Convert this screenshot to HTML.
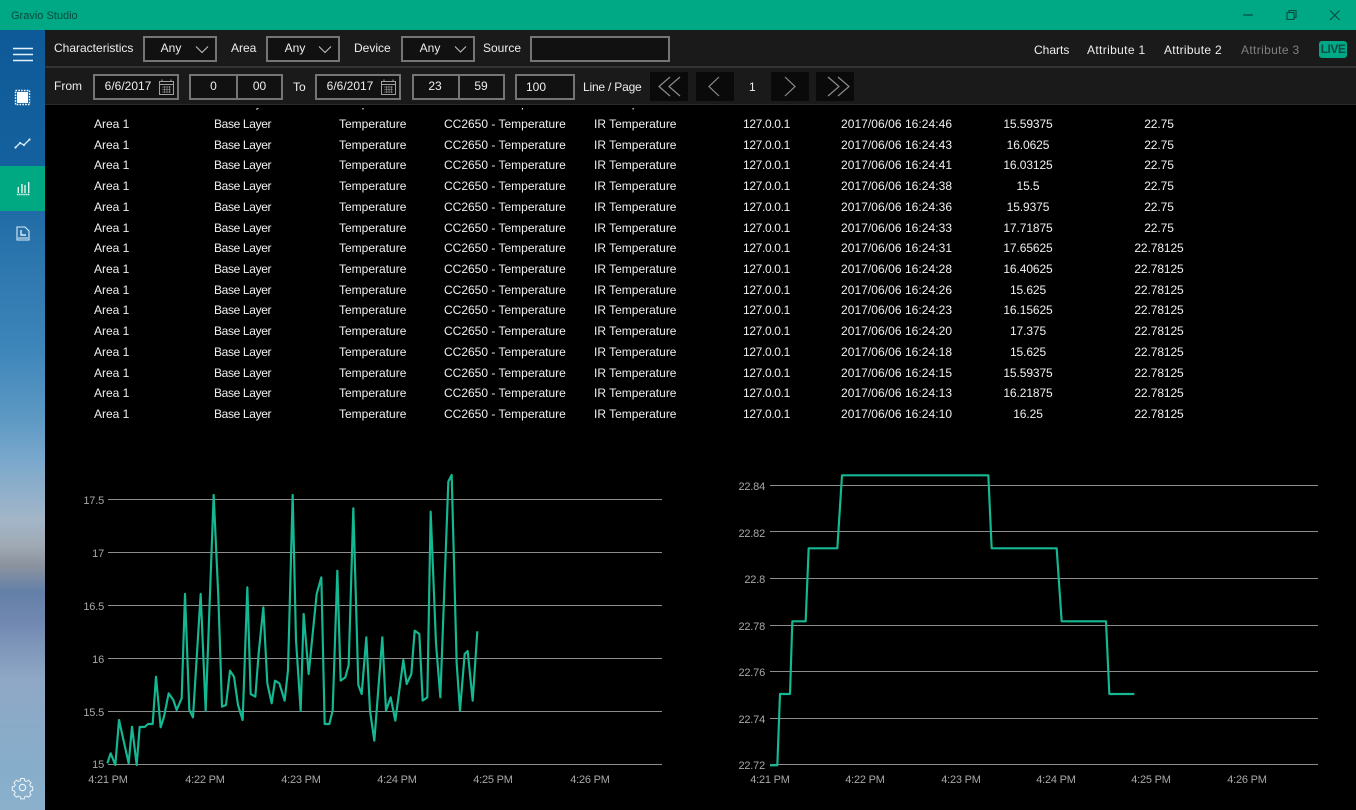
<!DOCTYPE html>
<html><head><meta charset="utf-8"><title>Gravio Studio</title>
<style>
html,body{margin:0;padding:0;width:1356px;height:810px;overflow:hidden;background:#000;font-family:"Liberation Sans",sans-serif;color:#eee}
.abs,.t,.b{position:absolute}
#title{left:0;top:0;width:1356px;height:30px;background:#00a985;z-index:5}
#title span{position:absolute;left:11px;top:9px;font-size:11px;line-height:14px;color:#084a40}
#side{left:0;top:30px;width:45px;height:780px;z-index:4;background:linear-gradient(180deg,#0e5a98 0,#14619e 135px,#2a74ad 220px,#3d86ba 320px,#5e99c4 390px,#7aa8cc 430px,#a3b6c8 490px,#a0aab5 515px,#8c939f 535px,#6480a8 562px,#7088b0 590px,#8fa8c5 650px,#86aecb 740px,#8ab0cc 780px)}
#sel{left:0;top:166px;width:45px;height:45px;background:#00a982;z-index:5}
#tb{left:45px;top:30px;width:1311px;height:75px;background:#1a1a1a;z-index:3;border-bottom:1px solid #2c2c2c;box-sizing:border-box}
#cover{left:45px;top:105px;width:1311px;height:3px;background:#000;z-index:2}
#sep{left:45px;top:66px;width:1311px;height:2px;background:#333;z-index:4}
.t{font-size:12px;line-height:16px;color:#eee;z-index:6;white-space:nowrap}
.b{border:2px solid #757575;background:#111;box-sizing:border-box;z-index:5;font-size:12px;color:#eee;line-height:21px}
.c{position:absolute;text-align:center}
.pg{position:absolute;top:72px;height:29px;width:38px;background:#0a0a0a;z-index:5}
#live{left:1319px;top:41px;width:28px;height:17px;background:#00a985;border-radius:3px;z-index:6;color:#0b4c44;font-size:12px;font-weight:bold;line-height:17px;text-align:center;letter-spacing:-.5px}
.r{position:absolute;left:0;width:1356px;height:20px;font-size:12px;line-height:20px;color:#f0f0f0;white-space:nowrap}
.r i{font-style:normal;position:absolute;top:0}
.r i:nth-child(1){left:94px}.r i:nth-child(2){left:214px;letter-spacing:-.35px}.r i:nth-child(3){left:339px}.r i:nth-child(4){left:444px}.r i:nth-child(5){left:594px}.r i:nth-child(6){left:743px;letter-spacing:-.35px}.r i:nth-child(7){left:841px;letter-spacing:.05px}
.r i:nth-child(8){left:978px;width:100px;text-align:center;letter-spacing:-.1px}.r i:nth-child(9){left:1109px;width:100px;text-align:center;letter-spacing:-.1px}
svg{position:absolute;left:0;top:0;overflow:visible}
#icons{z-index:7}
#charts text{font-family:"Liberation Sans",sans-serif;font-size:11px;fill:#a8a8a8;letter-spacing:-.2px}
</style></head><body>
<div class="abs" id="title"><span>Gravio Studio</span></div>
<div class="abs" id="side"></div>
<div class="abs" id="sel"></div>
<div class="abs" id="tb"></div>
<div class="abs" id="cover"></div>
<div class="abs" id="sep"></div>

<div class="t" style="left:54px;top:40px">Characteristics</div>
<div class="b" style="left:143px;top:36px;width:74px;height:26px"><span class="c" style="left:8px;width:36px">Any</span></div>
<div class="t" style="left:231px;top:40px">Area</div>
<div class="b" style="left:266px;top:36px;width:74px;height:26px"><span class="c" style="left:9px;width:36px">Any</span></div>
<div class="t" style="left:354px;top:40px">Device</div>
<div class="b" style="left:401px;top:36px;width:74px;height:26px"><span class="c" style="left:9px;width:36px">Any</span></div>
<div class="t" style="left:483px;top:40px">Source</div>
<div class="b" style="left:530px;top:36px;width:140px;height:26px"></div>

<div class="t" style="left:1034px;top:42px">Charts</div>
<div class="t" style="left:1087px;top:42px;letter-spacing:.35px">Attribute 1</div>
<div class="t" style="left:1164px;top:42px;letter-spacing:.3px">Attribute 2</div>
<div class="t" style="left:1241px;top:42px;color:#808080;letter-spacing:.35px">Attribute 3</div>
<div class="abs" id="live">LIVE</div>

<div class="t" style="left:54px;top:78px">From</div>
<div class="b" style="left:93px;top:74px;width:86px;height:26px;line-height:20px"><span class="c" style="left:5px;width:56px">6/6/2017</span></div>
<div class="b" style="left:189px;top:74px;width:94px;height:26px"><span class="c" style="left:0;width:45px">0</span><span class="c" style="left:45px;width:45px;border-left:2px solid #757575;box-sizing:border-box;height:22px">00</span></div>
<div class="t" style="left:293px;top:79px">To</div>
<div class="b" style="left:315px;top:74px;width:86px;height:26px;line-height:20px"><span class="c" style="left:5px;width:56px">6/6/2017</span></div>
<div class="b" style="left:412px;top:74px;width:93px;height:26px"><span class="c" style="left:-1px;width:44px">23</span><span class="c" style="left:44px;width:44px;border-left:2px solid #757575;box-sizing:border-box;height:22px">59</span></div>
<div class="b" style="left:515px;top:74px;width:60px;height:26px;line-height:23px"><span class="c" style="left:-1px;width:40px">100</span></div>
<div class="t" style="left:583px;top:79px;letter-spacing:-.2px">Line / Page</div>
<div class="pg" style="left:650px"></div><div class="pg" style="left:696px"></div>
<div class="t" style="left:749px;top:79px">1</div>
<div class="pg" style="left:771px"></div><div class="pg" style="left:816px"></div>

<svg id="icons" class="abs" width="1356" height="810" style="z-index:7" fill="none">
<!-- window controls -->
<path d="M1243 15h10" stroke="#084a40" stroke-width="1.2"/>
<path d="M1287 12.500h7v7h-7zM1289 12.500v-2h7v7h-2" stroke="#084a40" stroke-width="1.1"/>
<path d="M1330 10.500l9.500 9.500M1339.500 10.500l-9.500 9.500" stroke="#084a40" stroke-width="1.1"/>
<!-- hamburger -->
<path d="M13 48.500h20M13 54.500h20M13 60.500h20" stroke="#e6f2fa" stroke-width="1.6"/>
<!-- chip -->
<rect x="17" y="92" width="11" height="11" fill="#fff"/>
<rect x="15.500" y="90.500" width="14" height="14" stroke="#fff" stroke-width="1.400" stroke-dasharray="1.600 1.200"/>
<!-- trend -->
<path d="M15 148l5-5 4 2 6-6" stroke="#dcebf5" stroke-width="1.300"/>
<circle cx="15.500" cy="147.500" r="1.100" fill="#dcebf5"/><circle cx="20" cy="143" r="1.100" fill="#dcebf5"/><circle cx="24" cy="145" r="1.100" fill="#dcebf5"/><circle cx="29.500" cy="139.500" r="1.100" fill="#dcebf5"/>
<!-- bars -->
<path d="M18.300 193v-6M22 193v-9M25 193v-8M28.700 193v-11" stroke="#e4f5f0" stroke-width="1.400"/>
<path d="M17 194.500h13" stroke="#e4f5f0" stroke-width="1.400" stroke-dasharray="1.500 .6"/>
<!-- report -->
<path d="M17 227h8l4 4v9H17z" stroke="#dcebf5" stroke-width="1.100"/>
<path d="M21 230v5h5" stroke="#dcebf5" stroke-width="1.400"/>
<path d="M18 238h10" stroke="#dcebf5" stroke-width="1.100"/>
<!-- gear -->
<g transform="translate(0 .5)">
<circle cx="22.500" cy="787" r="3.200" stroke="#eef5fa" stroke-width="1.100"/>
<path d="M20.700 778h3.600l.5 2.200 1.700.7 2-1.200 2.500 2.500-1.200 2 .7 1.700 2.200.5v3.600l-2.200.5-.7 1.700 1.200 2-2.500 2.500-2-1.200-1.700.7-.5 2.200h-3.600l-.5-2.200-1.700-.7-2 1.200-2.500-2.500 1.200-2-.7-1.700-2.200-.5v-3.600l2.200-.5.7-1.700-1.200-2 2.500-2.500 2 1.200 1.700-.7z" stroke="#eef5fa" stroke-width="1"/>
</g>
<!-- chevrons dropdown -->
<path d="M196 46.500l6 6 6-6M319 46.500l6 6 6-6M455 46.500l5.500 5.500 5.500-5.500" stroke="#c4c4c4" stroke-width="1"/>
<!-- calendars -->
<g stroke="#a0a0a0" stroke-width="1">
<path d="M159.500 81.500h14v13h-14zM159.500 84.500h14M162 79.500v2M171 79.500v2"/>
<path d="M162 87h9M162 89.500h9M162 92h9M164.500 86v7M167 86v7M169.500 86v7" stroke-width=".6"/>
<path d="M381.500 81.500h14v13h-14zM381.500 84.500h14M384 79.500v2M393 79.500v2"/>
<path d="M384 87h9M384 89.500h9M384 92h9M386.500 86v7M389 86v7M391.500 86v7" stroke-width=".6"/>
</g>
<!-- paging -->
<g stroke="#8c8c8c" stroke-width="1.200">
<path d="M670 77l-11 9.500 11 9.500M680 77l-11 9.500 11 9.500"/>
<path d="M719 77l-10 9.500 10 9.500"/>
<path d="M785 77l10 9.500-10 9.500"/>
<path d="M828 77l11 9.500-11 9.500M838 77l11 9.500-11 9.500"/>
</g>
</svg>

<div id="rows">
<div class="r" style="top:93.300px"><i>Area 1</i><i>Base Layer</i><i>Temperature</i><i>CC2650 - Temperature</i><i>IR Temperature</i><i>127.0.0.1</i><i>2017/06/06 16:24:48</i><i>15.5</i><i>22.75</i></div>
<div class="r" style="top:114px"><i>Area 1</i><i>Base Layer</i><i>Temperature</i><i>CC2650 - Temperature</i><i>IR Temperature</i><i>127.0.0.1</i><i>2017/06/06 16:24:46</i><i>15.59375</i><i>22.75</i></div>
<div class="r" style="top:134.700px"><i>Area 1</i><i>Base Layer</i><i>Temperature</i><i>CC2650 - Temperature</i><i>IR Temperature</i><i>127.0.0.1</i><i>2017/06/06 16:24:43</i><i>16.0625</i><i>22.75</i></div>
<div class="r" style="top:155.400px"><i>Area 1</i><i>Base Layer</i><i>Temperature</i><i>CC2650 - Temperature</i><i>IR Temperature</i><i>127.0.0.1</i><i>2017/06/06 16:24:41</i><i>16.03125</i><i>22.75</i></div>
<div class="r" style="top:176.100px"><i>Area 1</i><i>Base Layer</i><i>Temperature</i><i>CC2650 - Temperature</i><i>IR Temperature</i><i>127.0.0.1</i><i>2017/06/06 16:24:38</i><i>15.5</i><i>22.75</i></div>
<div class="r" style="top:196.800px"><i>Area 1</i><i>Base Layer</i><i>Temperature</i><i>CC2650 - Temperature</i><i>IR Temperature</i><i>127.0.0.1</i><i>2017/06/06 16:24:36</i><i>15.9375</i><i>22.75</i></div>
<div class="r" style="top:217.500px"><i>Area 1</i><i>Base Layer</i><i>Temperature</i><i>CC2650 - Temperature</i><i>IR Temperature</i><i>127.0.0.1</i><i>2017/06/06 16:24:33</i><i>17.71875</i><i>22.75</i></div>
<div class="r" style="top:238.300px"><i>Area 1</i><i>Base Layer</i><i>Temperature</i><i>CC2650 - Temperature</i><i>IR Temperature</i><i>127.0.0.1</i><i>2017/06/06 16:24:31</i><i>17.65625</i><i>22.78125</i></div>
<div class="r" style="top:259px"><i>Area 1</i><i>Base Layer</i><i>Temperature</i><i>CC2650 - Temperature</i><i>IR Temperature</i><i>127.0.0.1</i><i>2017/06/06 16:24:28</i><i>16.40625</i><i>22.78125</i></div>
<div class="r" style="top:279.700px"><i>Area 1</i><i>Base Layer</i><i>Temperature</i><i>CC2650 - Temperature</i><i>IR Temperature</i><i>127.0.0.1</i><i>2017/06/06 16:24:26</i><i>15.625</i><i>22.78125</i></div>
<div class="r" style="top:300.400px"><i>Area 1</i><i>Base Layer</i><i>Temperature</i><i>CC2650 - Temperature</i><i>IR Temperature</i><i>127.0.0.1</i><i>2017/06/06 16:24:23</i><i>16.15625</i><i>22.78125</i></div>
<div class="r" style="top:321.100px"><i>Area 1</i><i>Base Layer</i><i>Temperature</i><i>CC2650 - Temperature</i><i>IR Temperature</i><i>127.0.0.1</i><i>2017/06/06 16:24:20</i><i>17.375</i><i>22.78125</i></div>
<div class="r" style="top:341.800px"><i>Area 1</i><i>Base Layer</i><i>Temperature</i><i>CC2650 - Temperature</i><i>IR Temperature</i><i>127.0.0.1</i><i>2017/06/06 16:24:18</i><i>15.625</i><i>22.78125</i></div>
<div class="r" style="top:362.500px"><i>Area 1</i><i>Base Layer</i><i>Temperature</i><i>CC2650 - Temperature</i><i>IR Temperature</i><i>127.0.0.1</i><i>2017/06/06 16:24:15</i><i>15.59375</i><i>22.78125</i></div>
<div class="r" style="top:383.200px"><i>Area 1</i><i>Base Layer</i><i>Temperature</i><i>CC2650 - Temperature</i><i>IR Temperature</i><i>127.0.0.1</i><i>2017/06/06 16:24:13</i><i>16.21875</i><i>22.78125</i></div>
<div class="r" style="top:404px"><i>Area 1</i><i>Base Layer</i><i>Temperature</i><i>CC2650 - Temperature</i><i>IR Temperature</i><i>127.0.0.1</i><i>2017/06/06 16:24:10</i><i>16.25</i><i>22.78125</i></div>
</div>

<svg id="charts" class="abs" width="1356" height="810" fill="none">
<g stroke="#8c8c8c" stroke-width="1">
<path d="M108 499.500H662M108 552.500H662M108 605.500H662M108 658.500H662M108 711.500H662M108 764.500H662"/>
<path d="M770 485.500H1318M770 531.500H1318M770 578.500H1318M770 625.500H1318M770 671.500H1318M770 718.500H1318M770 764.500H1318"/>
</g>
<g transform="translate(70 470) scale(.33333)">
<polyline stroke="#14b892" stroke-width="6.500" stroke-linejoin="round" points="112,880 122,850 136,885 147,750 176,880 186,770 200,885 209,771 224,771 234,762 248,762 258,620 272,772 282,740 296,670 310,690 320,720 335,685 345,372 358,720 369,742 392,372 407,722 431,75 445,380 456,710 468,705 480,602 492,620 504,705 518,750 532,352 542,672 556,680 566,550 580,412 592,640 605,700 615,632 628,640 644,692 654,600 668,75 678,510 692,722 701,432 716,612 740,372 754,322 764,762 778,762 788,722 802,302 812,632 826,622 836,585 850,115 865,645 875,672 889,502 900,722 913,812 937,502 948,722 962,682 976,752 1000,570 1010,642 1024,612 1034,482 1048,492 1058,692 1072,682 1082,125 1098,520 1111,682 1135,35 1145,15 1160,580 1170,722 1184,552 1193,543 1208,692 1222,484"/>
</g>
<g transform="translate(730 460) scale(.33333)">
<polyline stroke="#14b892" stroke-width="6.500" stroke-linejoin="round" points="120,916 142,916 150,702 180,702 187,484 227,484 236,265 322,265 336,46 775,46 785,265 980,265 995,484 1128,484 1138,702 1213,702"/>
</g>
<g text-anchor="end" dominant-baseline="central">
<text x="104" y="501">17.5</text><text x="104" y="554">17</text><text x="104" y="607">16.5</text><text x="104" y="660">16</text><text x="104" y="713">15.5</text><text x="104" y="765">15</text>
<text x="765" y="487">22.84</text><text x="765" y="534">22.82</text><text x="765" y="580">22.8</text><text x="765" y="627">22.78</text><text x="765" y="673">22.76</text><text x="765" y="720">22.74</text><text x="765" y="766">22.72</text>
</g>
<g text-anchor="middle">
<text x="108" y="783">4:21 PM</text><text x="205" y="783">4:22 PM</text><text x="301" y="783">4:23 PM</text><text x="397" y="783">4:24 PM</text><text x="493" y="783">4:25 PM</text><text x="590" y="783">4:26 PM</text>
<text x="770" y="783">4:21 PM</text><text x="865" y="783">4:22 PM</text><text x="961" y="783">4:23 PM</text><text x="1056" y="783">4:24 PM</text><text x="1151" y="783">4:25 PM</text><text x="1247" y="783">4:26 PM</text>
</g>
</svg>
</body></html>
